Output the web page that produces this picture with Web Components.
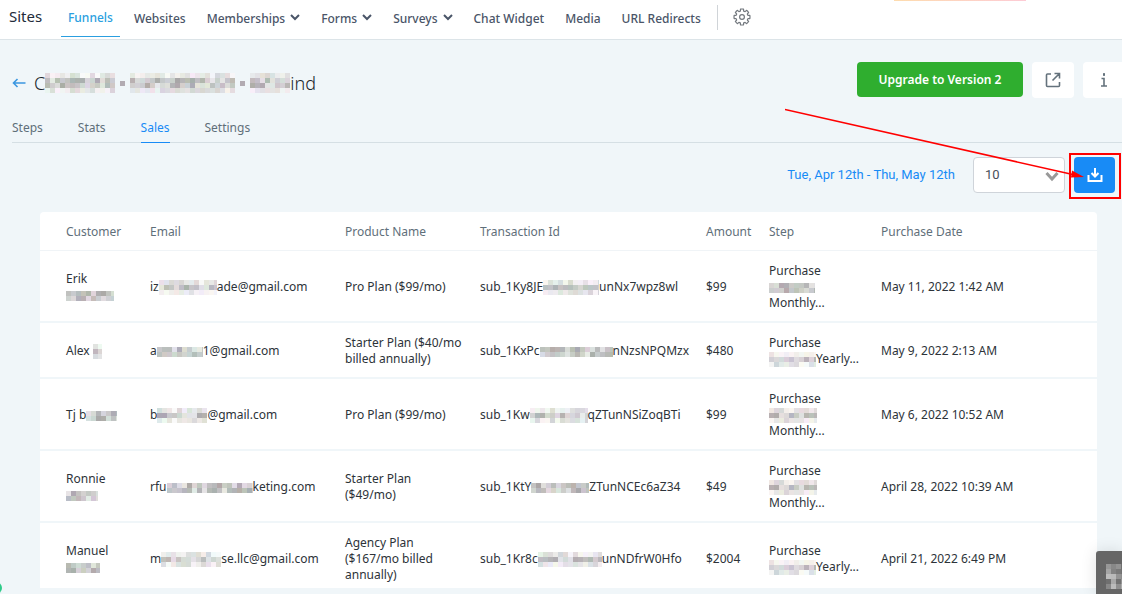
<!DOCTYPE html>
<html lang="en">
<head>
<meta charset="utf-8">
<title>Sites - Funnels - Sales</title>
<style>
  body { margin: 0; background: #f0f6f9; font: 12px/16px "Noto Sans", "Open Sans", sans-serif; color: #2d3339; overflow: hidden; }
</style>
</head>
<body>
<sites-app></sites-app>
<script>
const define = (name, html, setup) => {
  const template = document.createElement('template');
  template.innerHTML = html;
  customElements.define(name, class extends HTMLElement {
    connectedCallback() {
      if (this.shadowRoot) return;
      this.attachShadow({ mode: 'open' }).append(template.content.cloneNode(true));
      if (setup) setup(this, this.shadowRoot);
    }
  });
};

/* Mosaic that hides private words: w, h and seed choose its size and tiles. */
define('pixel-mask', `<style>
  :host { display: inline-block; vertical-align: middle; line-height: 0; margin: -4px 0; }
  svg { display: block; }
</style><svg shape-rendering="crispEdges" aria-hidden="true"></svg>`, (host, root) => {
  const w = +host.getAttribute('w'), h = +(host.getAttribute('h') || 15);
  let s = +(host.getAttribute('seed') || 1) * 7919 + w;
  const dark = host.hasAttribute('dark');
  const rnd = () => (s = (s * 16807) % 2147483647) / 2147483647;
  for (let i = 0; i < 5; i++) rnd();
  const svg = root.querySelector('svg');
  svg.setAttribute('width', w); svg.setAttribute('height', h);
  let out = '';
  const rows = Math.ceil(h / 5);
  for (let y = 0; y < rows; y++) for (let x = 0; x < w; x += 5) {
    const edge = !dark && (y === 0 || y === rows - 1) && rows > 2;
    const base = dark ? 110 + rnd() * 80 : edge ? 205 + rnd() * 36 : 164 + rnd() * 58;
    const t = () => Math.round(Math.min(250, base + (dark ? 0 : rnd() * 16)));
    out += `<rect x="${x}" y="${y * 5}" width="5" height="5" fill="rgb(${t()},${t()},${t()})"/>`;
  }
  svg.innerHTML = out;
});

define('nav-item', `<style>
  :host { display: flex; align-items: center; height: 37px; box-sizing: border-box; }
  a { color: #4a5568; font-weight: 500; text-decoration: none; white-space: nowrap; }
  svg { display: none; margin-left: 5px; margin-bottom: 4px; }
  :host([menu]) svg { display: block; }
  :host([active]) { padding: 0 7px; border-bottom: 1px solid #2b9fe0; }
  :host([active]) a { color: #2b9fe0; }
</style><a href="#"><slot></slot></a>
<svg width="10" height="8" viewBox="0 0 10 8" fill="none" stroke="#4a5568" stroke-width="2"><path d="M1 2l4 4 4-4"/></svg>`);

define('site-nav', `<style>
  :host { display: block; background: #fff; border-bottom: 1px solid #dce4e8; position: relative; }
  nav { display: flex; height: 39px; align-items: flex-start; padding-left: 9px; }
  strong { font-size: 15px; font-weight: 400; line-height: 33px; width: 52px; color: #222b3a; }
  .links { display: flex; gap: 21px; }
  nav-item[active] { margin-right: -7px; }
  i { width: 1px; height: 25px; margin: 5px 15px 0 16px; background: #d0d4d8; }
  button { border: 0; padding: 0; margin-top: 8px; background: none; height: 18px; }
  svg { display: block; }
  .promo { position: absolute; top: 0; right: 96px; width: 132px; height: 1px; background: linear-gradient(90deg, #fedcae, #fdcbd5); }
</style>
<nav><strong>Sites</strong>
<div class="links"><nav-item active>Funnels</nav-item><nav-item>Websites</nav-item><nav-item menu>Memberships</nav-item><nav-item menu>Forms</nav-item><nav-item menu>Surveys</nav-item><nav-item>Chat Widget</nav-item><nav-item>Media</nav-item><nav-item>URL Redirects</nav-item></div>
<i></i><button aria-label="Settings"><svg width="18" height="18" viewBox="0 0 18 18" fill="none" stroke="#73787e" stroke-width="1.2" stroke-linejoin="round"><g id="gear"></g><circle cx="9" cy="9" r="2.4"/></svg></button></nav>
<div class="promo"></div>`, (host, root) => {
  let d = '';
  for (let i = 0; i < 8; i++) {
    const p = (r, a) => { const t = (i * 45 + a) * Math.PI / 180; return (9 + r * Math.cos(t)).toFixed(2) + ' ' + (9 + r * Math.sin(t)).toFixed(2); };
    d += (i ? 'L' : 'M') + p(6.2, -15) + 'L' + p(8, -11) + 'A8 8 0 0 1 ' + p(8, 11) + 'L' + p(6.2, 15) + 'A2 2 0 0 0 ' + p(6.2, 30);
  }
  root.querySelector('#gear').innerHTML = `<path d="${d}Z"/>`;
});

define('page-head', `<style>
  :host { display: flex; justify-content: space-between; align-items: flex-start; padding: 22px 0 0 12px; }
  .title { display: flex; align-items: center; margin-top: 9px; height: 24px; }
  .title a { display: block; width: 22px; }
  svg { display: block; }
  h1 { margin: 0; font-size: 18px; line-height: 24px; font-weight: 300; color: #20262c; display: flex; align-items: center; white-space: nowrap; }
  .tile { margin-right: 5px; margin-left: 5px; }
  .actions { display: flex; gap: 9px; margin-right: -3px; }
  button { border: 0; border-radius: 4px; font: inherit; height: 36px; width: 42px; padding: 0; background: #fff; display: flex; align-items: center; justify-content: center; }
  .up { width: 166px; height: 35px; background: #2fae2f; color: #fff; font-weight: 600; }
</style>
<div class="title"><a href="#" aria-label="Back"><svg width="14" height="10" viewBox="0 0 14 10" fill="none" stroke="#3b97e0" stroke-width="1.6"><path d="M13.500 5H1.500M5.500 1L1.500 5l4 4"/></svg></a>
<h1>C<pixel-mask w="70" h="20" seed="3"></pixel-mask><pixel-mask class="tile" w="5" h="5"></pixel-mask><pixel-mask w="105" h="20" seed="8"></pixel-mask><pixel-mask class="tile" w="5" h="5"></pixel-mask><pixel-mask w="40" h="20" seed="5"></pixel-mask>ind</h1></div>
<div class="actions"><button class="up">Upgrade to Version 2</button>
<button aria-label="Open in new tab"><svg width="16" height="16" viewBox="0 0 16 16" fill="none" stroke="#64727c" stroke-width="1.600"><path d="M6 2H2.500Q1.500 2 1.500 3v10.500q0 1 1 1h11q1 0 1-1V10M9.500 1.500h5v5M14.500 1.500L7.500 8.500"/></svg></button>
<button aria-label="Information"><svg width="8" height="16" viewBox="0 0 8 16" fill="none" stroke="#64727c" stroke-width="1.600"><path d="M1.500 6.500H4V14M1 14h6M3 2.500h2" /><path d="M4 1v3"/></svg></button></div>`);

define('page-tabs', `<style>
  nav { display: flex; gap: 35px; margin-left: 12px; border-bottom: 1px solid #d5dfe4; height: 24px; }
  :host { display: block; margin-top: 20px; }
  a { color: #5f6f7a; text-decoration: none; height: 24px; line-height: 19px; }
  a.on { color: #188bf6; border-bottom: 1px solid #188bf6; }
</style><nav><a href="#">Steps</a><a href="#">Stats</a><a href="#" class="on">Sales</a><a href="#">Settings</a></nav>`);

define('sales-toolbar', `<style>
  :host { display: flex; justify-content: flex-end; align-items: center; padding: 14px 7px 19px 0; position: relative; }
  .range { font: 13px/18px Roboto, sans-serif; color: #188bf6; text-decoration: none; margin-right: 18px; }
  .pick { position: relative; margin-right: 9px; }
  select { appearance: none; display: block; width: 92px; height: 36px; border: 1px solid #cfd4da; border-radius: 4px; background: #fff; padding: 0 11px; font: 13px/18px Roboto, sans-serif; color: #48505a; }
  .pick svg { position: absolute; right: 6px; top: 14px; pointer-events: none; }
  .save { position: relative; }
  button { display: flex; align-items: center; justify-content: center; width: 41px; height: 36px; padding: 0; border: 0; border-radius: 4px; background: #188bf6; }
  .mark { position: absolute; inset: -4px -6px -6px -5px; border: 2px solid #f00; pointer-events: none; }
  .arrow { position: absolute; right: 37px; top: -35px; pointer-events: none; z-index: 1; }
</style>
<a class="range" href="#">Tue, Apr 12th - Thu, May 12th</a>
<div class="pick"><select aria-label="Rows per page"><option>10</option></select><svg width="14" height="11" viewBox="0 0 14 11" fill="none" stroke="#999" stroke-width="3"><path d="M1.500 2L7 8l5.500-6"/></svg></div>
<div class="save"><button aria-label="Download"><svg width="16" height="16" viewBox="0 0 16 16" fill="none" stroke="#fff" stroke-width="2"><path d="M1.500 8v6h13V8M8 1v8M4.500 6L8 9.500 11.500 6"/></svg></button><div class="mark"></div></div>
<svg class="arrow" width="300" height="72" viewBox="0 0 300 72"><path d="M0 1.500L290 67" stroke="#f00" stroke-width="1.500"/><path d="M299 69l-12-6.500-1 7z" fill="#f00"/></svg>`);

define('sales-table', `<style>
  :host { display: block; margin: 0 25px 0 40px; background: #fff; border-radius: 4px 4px 0 0; overflow: hidden; }
  table { width: 100%; border-collapse: separate; border-spacing: 0; table-layout: fixed; }
  th { text-align: left; font-weight: 400; color: #5f6f7a; height: 36px; padding: 2px 0 0; border-bottom: 1px solid #f0f4f7; }
  td { padding: 12px 0 10px; border-bottom: 2px solid #f0f6f9; vertical-align: middle; white-space: nowrap; }
  tr :first-child:is(th, td) { padding-left: 26px; }
  tr:last-child td { border: 0; padding-bottom: 5px; }
</style>
<table><colgroup><col style="width:110px"><col style="width:195px"><col style="width:135px"><col style="width:226px"><col style="width:63px"><col style="width:112px"><col></colgroup>
<thead><tr><th>Customer</th><th>Email</th><th>Product Name</th><th>Transaction Id</th><th>Amount</th><th>Step</th><th>Purchase Date</th></tr></thead>
<tbody>
<tr><td>Erik<br><pixel-mask w="48" h="10" seed="2"></pixel-mask></td><td>iz<pixel-mask w="58" seed="4"></pixel-mask>ade@gmail.com</td><td>Pro Plan ($99/mo)</td><td>sub_1Ky8JE<pixel-mask w="56" seed="6"></pixel-mask>unNx7wpz8wl</td><td>$99</td><td>Purchase<br><pixel-mask w="46" h="10" seed="7"></pixel-mask><br>Monthly...</td><td>May 11, 2022 1:42 AM</td></tr>
<tr><td>Alex <pixel-mask w="9" seed="9"></pixel-mask></td><td>a<pixel-mask w="46" h="10" seed="10"></pixel-mask>1@gmail.com</td><td>Starter Plan ($40/mo<br>billed annually)</td><td>sub_1KxPc<pixel-mask w="73" h="10" seed="11"></pixel-mask>nNzsNPQMzx</td><td>$480</td><td>Purchase<br><pixel-mask w="47" h="15" seed="12"></pixel-mask>Yearly...</td><td>May 9, 2022 2:13 AM</td></tr>
<tr><td>Tj b<pixel-mask w="31" h="10" seed="13"></pixel-mask></td><td>b<pixel-mask w="50" seed="14"></pixel-mask>@gmail.com</td><td>Pro Plan ($99/mo)</td><td>sub_1Kw<pixel-mask w="58" seed="15"></pixel-mask>qZTunNSiZoqBTi</td><td>$99</td><td>Purchase<br><pixel-mask w="48" seed="16"></pixel-mask><br>Monthly...</td><td>May 6, 2022 10:52 AM</td></tr>
<tr><td>Ronnie<br><pixel-mask w="32" h="10" seed="17"></pixel-mask></td><td>rfu<pixel-mask w="86" h="10" seed="18"></pixel-mask>keting.com</td><td>Starter Plan<br>($49/mo)</td><td>sub_1KtY<pixel-mask w="58" h="10" seed="19"></pixel-mask>ZTunNCEc6aZ34</td><td>$49</td><td>Purchase<br><pixel-mask w="48" seed="16"></pixel-mask><br>Monthly...</td><td>April 28, 2022 10:39 AM</td></tr>
<tr><td>Manuel<br><pixel-mask w="34" h="10" seed="20"></pixel-mask></td><td>m<pixel-mask w="60" seed="21"></pixel-mask>se.llc@gmail.com</td><td>Agency Plan<br>($167/mo billed<br>annually)</td><td>sub_1Kr8c<pixel-mask w="64" seed="22"></pixel-mask>unNDfrW0Hfo</td><td>$2004</td><td>Purchase<br><pixel-mask w="47" seed="12"></pixel-mask>Yearly...</td><td>April 21, 2022 6:49 PM</td></tr>
</tbody></table>`);

define('sites-app', `<style>
  :host { display: block; position: relative; min-height: 100vh; overflow: hidden; }
  .chat { position: absolute; right: 0; bottom: 0; width: 26px; height: 43px; box-sizing: border-box; padding: 13px 0 0 10px; background: #666; border-radius: 3px 0 0 0; box-shadow: 0 0 16px rgba(0,0,0,.12); overflow: hidden; }
  .chat pixel-mask { display: block; margin: 0; }
  .dot { position: absolute; left: -10px; bottom: 0; width: 12px; height: 12px; border-radius: 50%; background: #2fcb8a; }
</style>
<site-nav></site-nav><page-head></page-head><page-tabs></page-tabs><sales-toolbar></sales-toolbar><sales-table></sales-table>
<div class="chat"><pixel-mask dark w="20" h="25" seed="30"></pixel-mask></div><div class="dot"></div>`);
</script>
</body>
</html>
